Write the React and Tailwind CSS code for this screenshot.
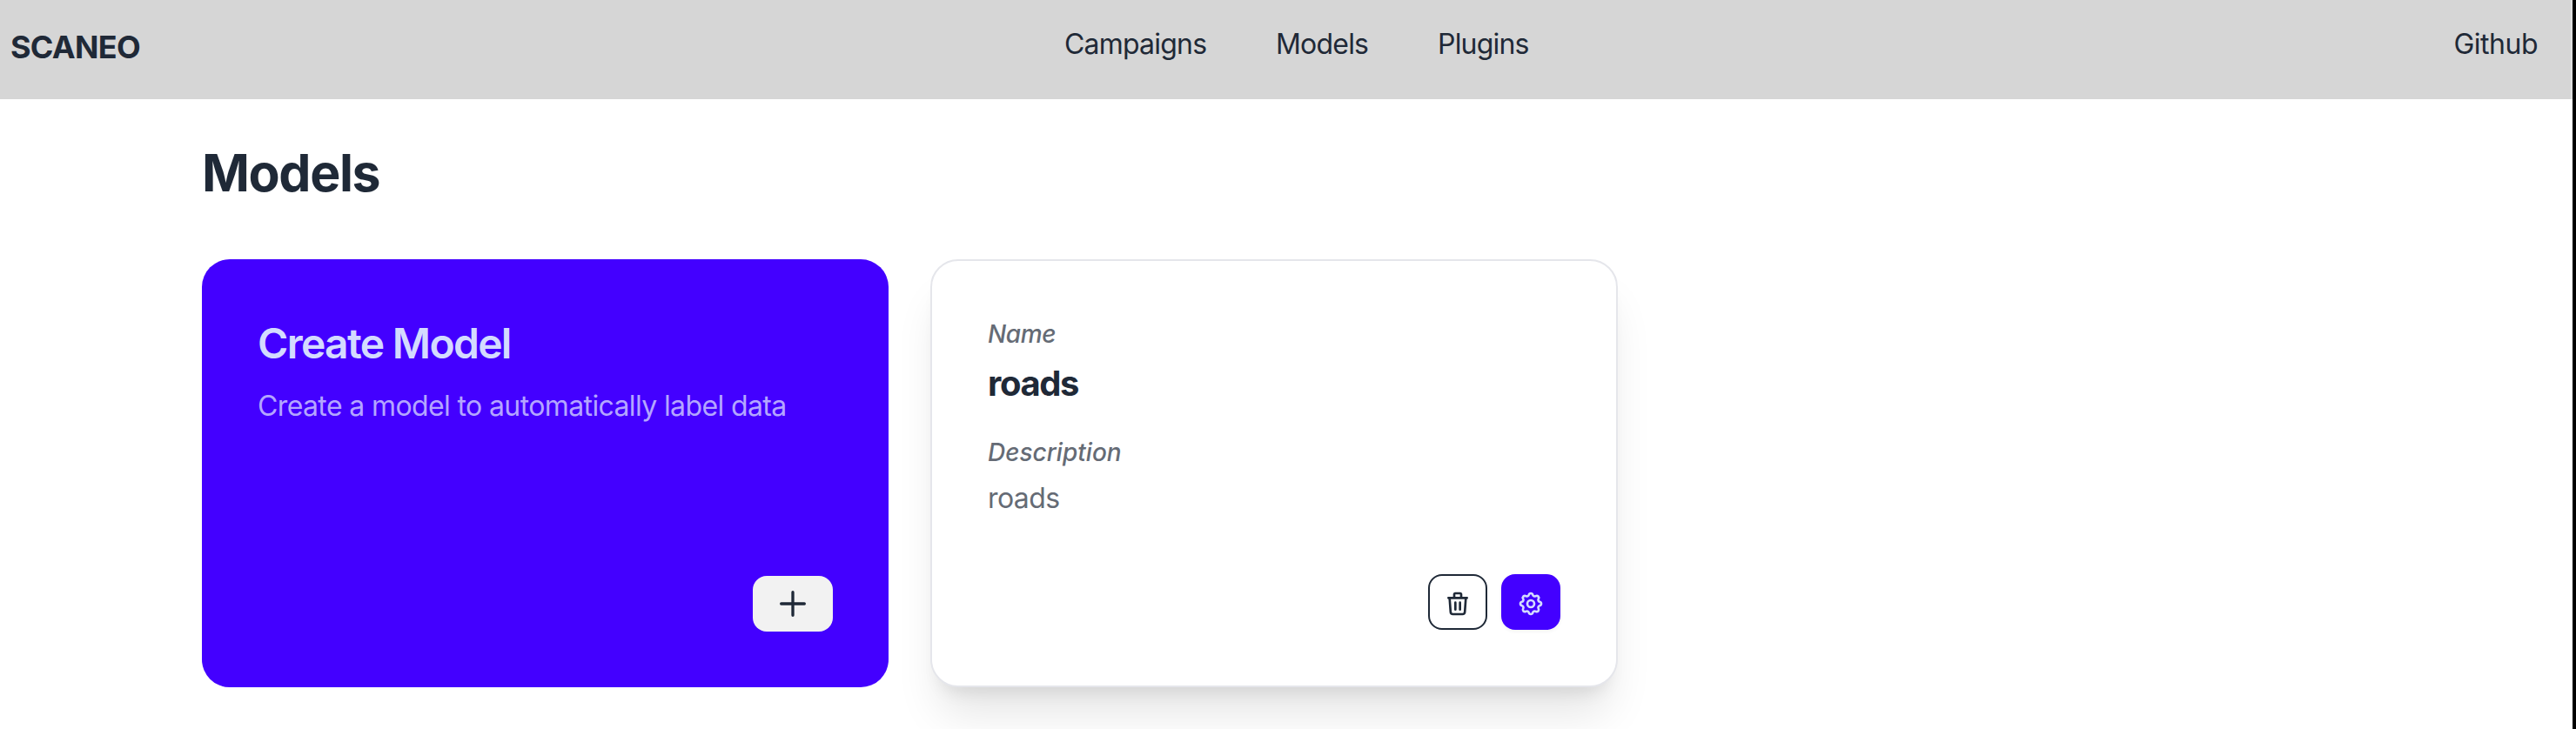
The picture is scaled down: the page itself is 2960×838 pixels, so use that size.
import React from "react";

function NavLink({ children, className }) {
  return <a className={"whitespace-nowrap " + className}>{children}</a>;
}

function PlusIcon() {
  return (
    <svg className="size-10" viewBox="0 0 24 24" fill="none" stroke="currentColor" strokeWidth="2" strokeLinecap="round" strokeLinejoin="round">
      <path d="M12 4v16m8-8H4" />
    </svg>
  );
}

function TrashIcon() {
  return (
    <svg className="size-8" viewBox="0 0 24 24" fill="none" stroke="currentColor" strokeWidth="2" strokeLinecap="round" strokeLinejoin="round">
      <path d="M19 7l-.867 12.142A2 2 0 0116.138 21H7.862a2 2 0 01-1.995-1.858L5 7m5 4v6m4-6v6m1-10V4a1 1 0 00-1-1h-4a1 1 0 00-1 1v3M4 7h16" />
    </svg>
  );
}

function CogIcon() {
  return (
    <svg className="size-8" viewBox="0 0 24 24" fill="none" stroke="currentColor" strokeWidth="2" strokeLinecap="round" strokeLinejoin="round">
      <path d="M10.325 4.317c.426-1.756 2.924-1.756 3.35 0a1.724 1.724 0 002.573 1.066c1.543-.94 3.31.826 2.37 2.37a1.724 1.724 0 001.065 2.572c1.756.426 1.756 2.924 0 3.35a1.724 1.724 0 00-1.066 2.573c.94 1.543-.826 3.31-2.37 2.37a1.724 1.724 0 00-2.572 1.065c-.426 1.756-2.924 1.756-3.35 0a1.724 1.724 0 00-2.573-1.066c-1.543.94-3.31-.826-2.37-2.37a1.724 1.724 0 00-1.065-2.572c-1.756-.426-1.756-2.924 0-3.35a1.724 1.724 0 001.066-2.573c-.94-1.543.826-3.31 2.37-2.37.996.608 2.296.07 2.572-1.065z" />
      <path d="M15 12a3 3 0 11-6 0 3 3 0 016 0z" />
    </svg>
  );
}

export default function App() {
  return (
    <div className="flex h-[838px] w-[2960px] overflow-hidden bg-black font-['Inter',sans-serif] text-[#1f2937]">
      <div className="flex w-[2956px] flex-col overflow-hidden bg-white">
        <header className="flex h-[114px] shrink-0 items-start justify-between border-r-2 border-[#dedede] bg-[#d6d6d6] pl-3 pr-[38px] text-[32px] leading-[40px]">
          <div className="w-[1211px] pt-[34px] text-[36px] font-bold tracking-[-0.7px]">SCANEO</div>
          <nav className="flex flex-1 gap-[80px] pt-[31px] tracking-[-0.8px]">
            <NavLink className="w-[163px]">Campaigns</NavLink>
            <NavLink className="w-[106px]">Models</NavLink>
            <NavLink className="w-[106px]">Plugins</NavLink>
          </nav>
          <NavLink className="pt-[31px] tracking-[-0.5px]">Github</NavLink>
        </header>
        <main className="flex flex-col px-[232px] pt-[49px]">
          <h1 className="text-[59px] leading-[72px] font-bold tracking-[-1.4px]">Models</h1>
          <div className="mt-[63px] flex gap-12">
            <section className="flex h-[492px] w-[789px] flex-col items-start rounded-[32px] bg-[#4300ff] px-16 pt-16 pb-16">
              <h2 className="mt-[5px] text-[48px] leading-[56px] font-semibold tracking-[-1.7px] text-[#d4dbff]">Create Model</h2>
              <p className="mt-[24px] text-[32px] leading-[40px] tracking-[-0.62px] text-[#b4a6ff]">Create a model to automatically label data</p>
              <button className="mt-auto flex h-16 w-[92px] items-center justify-center self-end rounded-2xl bg-[#f2f2f2]">
                <PlusIcon />
              </button>
            </section>
            <section className="flex h-[492px] w-[790px] flex-col items-start rounded-[32px] border-2 border-[#e5e6eb] bg-white px-16 pt-16 pb-16 shadow-[0_40px_50px_-10px_rgba(0,0,0,0.1),0_16px_20px_-12px_rgba(0,0,0,0.1)]">
              <div className="text-[28px] leading-[40px] font-medium italic tracking-[-0.4px] text-[#656b75]">Name</div>
              <div className="mt-[9px] text-[40px] leading-[56px] font-bold tracking-[-1.4px]">roads</div>
              <div className="mt-[31px] text-[28px] leading-[40px] font-medium italic tracking-[0px] text-[#656b75]">Description</div>
              <div className="mt-[9px] text-[32px] leading-[48px] tracking-[-0.6px] text-[#656b75]">roads</div>
              <div className="mt-auto flex gap-4 self-end">
                <button className="flex h-16 w-[68px] items-center justify-center rounded-2xl border-2 border-[#1f2937] pt-[3px]">
                  <TrashIcon />
                </button>
                <button className="flex h-16 w-[68px] items-center justify-center rounded-2xl bg-[#4300ff] pt-[3px] text-[#d4dbff] shadow-[0_2px_4px_rgba(0,0,0,0.05)]">
                  <CogIcon />
                </button>
              </div>
            </section>
          </div>
        </main>
      </div>
    </div>
  );
}
